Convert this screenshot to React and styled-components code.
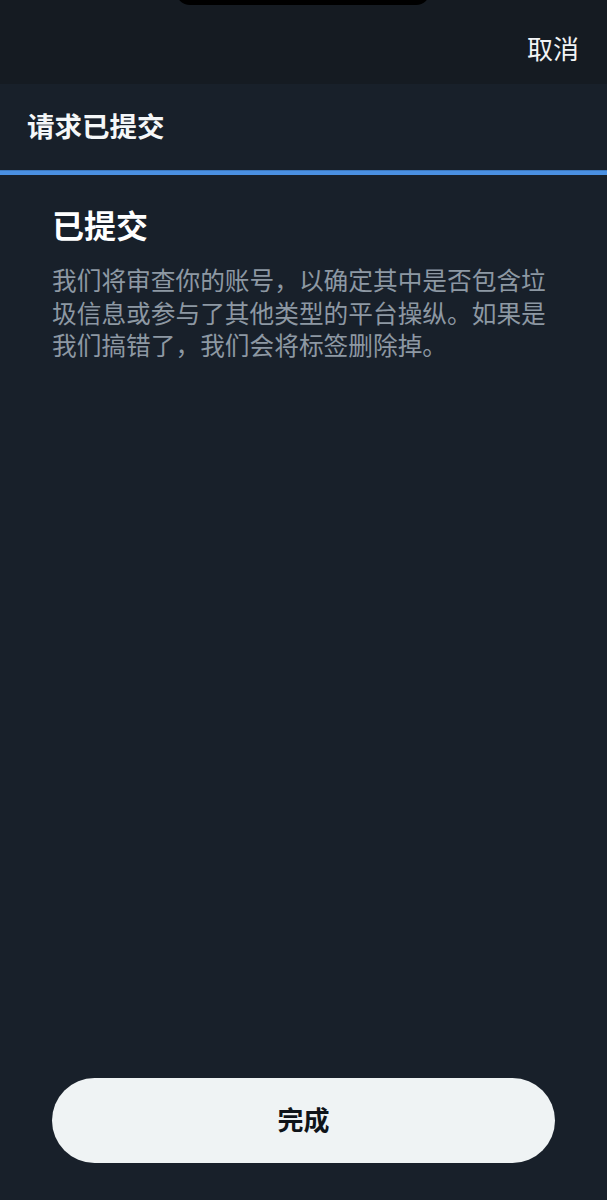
import React from "react";
import styled, { createGlobalStyle } from "styled-components";

const Global = createGlobalStyle`
  html, body { margin: 0; padding: 0; background: #18202a; }
  body { font-family: "Noto Sans CJK SC", "Noto Sans", sans-serif; -webkit-font-smoothing: antialiased; }
  * { box-sizing: border-box; }
`;

const Page = styled.div`
  width: 607px;
  height: 1200px;
  display: flex;
  flex-direction: column;
  background: #18202a;
  overflow: hidden;
`;

const TopBar = styled.header`
  position: relative;
  height: 84px;
  flex: none;
  background: #151b22;
  display: flex;
  justify-content: flex-end;
  align-items: center;
  padding: 12px 28px 0 0;
`;

const Notch = styled.div`
  position: absolute;
  top: -20px;
  left: 176px;
  width: 254px;
  height: 25px;
  background: #000;
  border-radius: 0 0 14px 14px;
`;

const CancelButton = styled.button`
  background: none;
  border: none;
  padding: 0;
  color: #f2f4f5;
  font-family: inherit;
  font-size: 26px;
  line-height: 1;
`;

const TitleBar = styled.div`
  height: 86px;
  flex: none;
  display: flex;
  align-items: center;
  padding: 0 0 4px 27px;
  color: #f5f7f8;
  font-size: 27.5px;
  font-weight: 700;
`;

const Progress = styled.div`
  height: 5px;
  flex: none;
  background: #4a90e2;
  border-top: 1px solid #3b78c0;
`;

const Content = styled.main`
  flex: 1;
  padding: 30px 52px 0 52px;
`;

const Heading = styled.h1`
  margin: 0;
  color: #ffffff;
  font-size: 32px;
  line-height: 38px;
  font-weight: 700;
`;

const Body = styled.p`
  margin: 20px 0 0;
  color: #8d98a3;
  font-size: 24.7px;
  line-height: 32.5px;
`;

const Footer = styled.footer`
  flex: none;
  padding: 0 52px 37px 52px;
`;

const DoneButton = styled.button`
  width: 100%;
  height: 85px;
  border: none;
  border-radius: 43px;
  background: #eff3f4;
  color: #0f1419;
  font-family: inherit;
  font-size: 26px;
  font-weight: 700;
  padding: 0 0 4px;
`;

export default function App() {
  return (
    <>
      <Global />
      <Page>
        <TopBar>
          <Notch />
          <CancelButton>取消</CancelButton>
        </TopBar>
        <TitleBar>请求已提交</TitleBar>
        <Progress />
        <Content>
          <Heading>已提交</Heading>
          <Body>
            我们将审查你的账号，以确定其中是否包含垃圾信息或参与了其他类型的平台操纵。如果是我们搞错了，我们会将标签删除掉。
          </Body>
        </Content>
        <Footer>
          <DoneButton>完成</DoneButton>
        </Footer>
      </Page>
    </>
  );
}
